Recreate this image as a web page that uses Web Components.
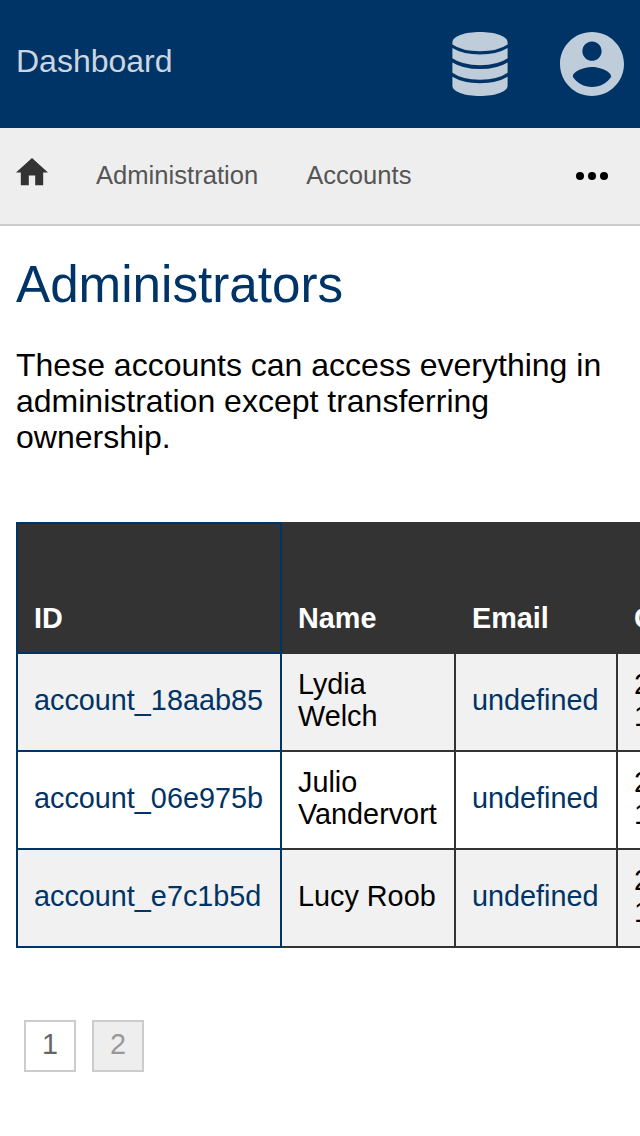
<!DOCTYPE html>
<html lang="en">
<head>
<meta charset="utf-8">
<title>Administrators</title>
<style>
html,body{margin:0;background:#fff;overflow:hidden}
body{width:640px;height:1136px;font-family:"Liberation Sans",Arial,sans-serif;color:#000}
</style>
</head>
<body>
<app-header>Dashboard</app-header>
<nav-bar><nav-item>Administration</nav-item><nav-item>Accounts</nav-item></nav-bar>
<page-content>
  <span slot="title">Administrators</span>
  <span slot="intro">These accounts can access everything in administration except transferring ownership.</span>
  <data-table>
    <table-row head><table-cell key>ID</table-cell><table-cell>Name</table-cell><table-cell>Email</table-cell><table-cell>Created</table-cell></table-row>
    <table-row shade><table-cell key link>account_18aab85</table-cell><table-cell>Lydia Welch</table-cell><table-cell link>undefined</table-cell><table-cell>2<br>1</table-cell></table-row>
    <table-row><table-cell key link>account_06e975b</table-cell><table-cell>Julio Vandervort</table-cell><table-cell link>undefined</table-cell><table-cell>2<br>1</table-cell></table-row>
    <table-row shade><table-cell key link>account_e7c1b5d</table-cell><table-cell>Lucy Roob</table-cell><table-cell link>undefined</table-cell><table-cell>2<br>1</table-cell></table-row>
  </data-table>
  <page-links><page-link>1</page-link><page-link other>2</page-link></page-links>
</page-content>
<script>
const define = (name, html) => customElements.define(name, class extends HTMLElement {
  constructor() {
    super();
    this.attachShadow({ mode: 'open' }).innerHTML = html;
  }
});

define('app-header', `<style>
:host{display:flex;box-sizing:border-box;height:128px;padding:32px 16px;background:#036;color:#ccd6e0;font-size:32px;line-height:36px}
.brand{flex:1;padding-top:11px}
.icons{display:flex;gap:52px}
svg{display:block;height:64px;fill:#bfccd9}
</style>
<div class="brand"><slot></slot></div>
<div class="icons">
<svg width="56" viewBox="0 0 56 64"><path d="M.4 10C1 4 13 0 28 0S55 4 55.600 10V12.500Q46 19.200 28 19.200Q10 19.200 .4 12.500Z"/><path d="M.4 16Q11 22.500 28 22.500Q45 22.500 55.600 16V26.300Q46 33.200 28 33.200Q10 33.200 .4 26.300Z"/><path d="M.4 30.400Q11 37 28 37Q45 37 55.600 30.400V40.800Q46 47.700 28 47.700Q10 47.700 .4 40.800Z"/><path d="M.4 44.800Q11 51.200 28 51.200Q45 51.200 55.600 44.800V54C55 60 43 64 28 64S1 60 .4 54Z"/></svg>
<svg width="64" viewBox="2 2 20 20"><path d="M12 2C6.480 2 2 6.480 2 12s4.480 10 10 10 10-4.480 10-10S17.520 2 12 2zm0 3c1.660 0 3 1.340 3 3s-1.340 3-3 3-3-1.340-3-3 1.340-3 3-3zm0 14.200c-2.500 0-4.710-1.280-6-3.220.03-1.990 4-3.080 6-3.080 1.990 0 5.970 1.090 6 3.080-1.290 1.940-3.500 3.220-6 3.220z"/></svg>
</div>`);

define('nav-bar', `<style>
:host{display:flex;align-items:center;box-sizing:border-box;height:98px;padding:0 32px 0 16px;gap:48px;background:#eee;border-bottom:2px solid #ccc}
.home{display:block;margin-bottom:8px}
.more{display:block;margin-left:auto}
</style>
<svg class="home" width="32" height="27.200" viewBox="2 3 20 17" fill="#333"><path d="M10 20v-6h4v6h5v-8h3L12 3 2 12h3v8z"/></svg>
<slot></slot>
<svg class="more" width="32" height="8" viewBox="0 0 32 8"><circle cx="4" cy="4" r="4"/><circle cx="16" cy="4" r="4"/><circle cx="28" cy="4" r="4"/></svg>`);

define('nav-item', `<style>:host{display:block;color:#555;font-size:25.6px;line-height:30px;padding-bottom:2px}</style><slot></slot>`);

define('page-content', `<style>
:host{display:block;padding:30px 16px 0}
h1{margin:0;font-size:51.2px;line-height:58px;font-weight:400;color:#036}
p{margin:33px 0 67px;font-size:32px;line-height:36px}
</style>
<h1><slot name="title"></slot></h1><p><slot name="intro"></slot></p><slot></slot>`);

define('data-table', `<style>:host{display:flex;flex-direction:column;width:802px;font-size:28.8px;line-height:32px}</style><slot></slot>`);

define('table-row', `<style>
:host{display:grid;grid-template-columns:266px 174px 162px 200px;height:98px;--align:center;--top:0px}
:host([shade]){background:#f1f1f1}
:host([head]){height:132px;background:#333;color:#fff;font-weight:700;--align:end;--top:2px}
</style><slot></slot>`);

define('table-cell', `<style>
:host{display:grid;align-items:var(--align);box-sizing:border-box;padding:0 16px;border:solid #333;border-width:0 2px 2px 0}
:host([key]){border-color:#036;border-width:var(--top) 2px 2px 2px}
:host([link]){color:#036}
div{padding:14px 0 18px}
</style><div><slot></slot></div>`);

define('page-links', `<style>:host{display:flex;gap:16px;padding:72px 8px 0}</style><slot></slot>`);

define('page-link', `<style>
:host{display:block;box-sizing:border-box;width:52px;height:52px;border:2px solid #ccc;background:#fff;color:#666;font-size:28.8px;line-height:44px;text-align:center}
:host([other]){background:#eee;color:#999}
</style><slot></slot>`);
</script>
</body>
</html>
